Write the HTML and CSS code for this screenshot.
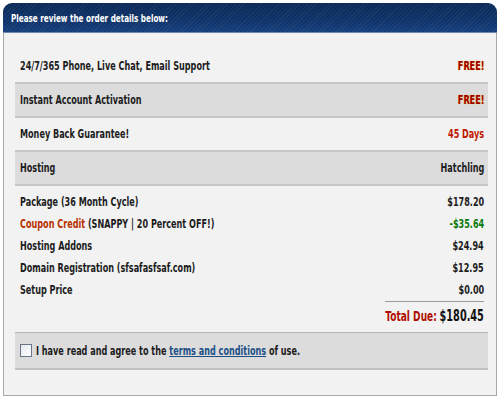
FILE: index.html
```html
<!DOCTYPE html>
<html>
<head>
<meta charset="utf-8">
<link rel="stylesheet" href="styles.css">
</head>
<body>
<div class="panel">
  <div class="panel-head"><span class="tx">Please review the order details below:</span></div>
  <div class="panel-body">
    <div class="row">
      <span class="tx">24/7/365 Phone, Live Chat, Email Support</span>
      <span class="tx r free">FREE!</span>
    </div>
    <div class="row shade">
      <span class="tx">Instant Account Activation</span>
      <span class="tx r free">FREE!</span>
    </div>
    <div class="row">
      <span class="tx">Money Back Guarantee!</span>
      <span class="tx r days">45 Days</span>
    </div>
    <div class="row shade">
      <span class="tx">Hosting</span>
      <span class="tx r">Hatchling</span>
    </div>
    <div class="items">
      <div class="item"><span class="tx">Package (36 Month Cycle)</span><span class="tx r">$178.20</span></div>
      <div class="item"><span class="tx"><span class="coupon">Coupon Credit</span> (SNAPPY | 20 Percent OFF!)</span><span class="tx r credit">-$35.64</span></div>
      <div class="item"><span class="tx">Hosting Addons</span><span class="tx r">$24.94</span></div>
      <div class="item"><span class="tx">Domain Registration (sfsafasfsaf.com)</span><span class="tx r">$12.95</span></div>
      <div class="item"><span class="tx">Setup Price</span><span class="tx r">$0.00</span></div>
    </div>
    <div class="total-wrap">
      <div class="total"><span class="tx r tot"><span class="total-label">Total Due:</span> <span class="total-amt">$180.45</span></span></div>
    </div>
    <div class="terms">
      <span class="check"></span>
      <span class="tx">I have read and agree to the <a href="#" class="link">terms and conditions</a> of use.</span>
    </div>
  </div>
</div>
</body>
</html>
```
FILE: styles.css
```css
html, body {
  margin: 0;
  padding: 0;
  background: #ffffff;
}
body {
  font-family: "DejaVu Sans Condensed", "DejaVu Sans", sans-serif;
  font-size: 12px;
  font-weight: bold;
  color: #1c1c1c;
}
.tx {
  display: inline-block;
  flex: none;
  white-space: nowrap;
  transform: scaleX(0.75);
  transform-origin: left center;
}
.tx.r {
  transform-origin: right center;
}
.panel {
  margin: 3px 3px 0 3px;
  width: 494px;
}
.panel-head {
  box-sizing: border-box;
  height: 30px;
  border-radius: 9px 9px 0 0;
  background:
    repeating-linear-gradient(135deg, rgba(255,255,255,0.05) 0 1px, rgba(0,0,0,0) 1px 3px),
    linear-gradient(to bottom, #0b2a57 0%, #0f336a 60%, #15407c 100%);
  border-bottom: 1px solid #6d86ad;
  color: #ffffff;
  font-size: 11px;
  line-height: 31px;
  padding-left: 8px;
}
.panel-head .tx {
  transform: scaleX(0.73);
}
.panel-body {
  background: #f2f2f2;
  border: 1px solid #a8a8a8;
  border-top: none;
  padding: 17px 8px 25px 11px;
}
.row {
  display: flex;
  justify-content: space-between;
  align-items: center;
  height: 32px;
  padding: 0 4px 0 5px;
  border-bottom: 2px solid #c6c6c6;
}
.shade {
  background: #dcdcdc;
}
.free {
  color: #a10000;
  text-shadow: 0 0 1px #e8a800;
}
.days {
  color: #c01800;
}
.items {
  padding: 5px 4px 0 5px;
}
.item {
  display: flex;
  justify-content: space-between;
  align-items: center;
  height: 22px;
}
.coupon {
  color: #b83000;
}
.credit {
  color: #0a7a0a;
}
.total-wrap {
  display: flex;
  justify-content: flex-end;
  padding-right: 4px;
}
.total {
  width: 99px;
  height: 28px;
  display: flex;
  justify-content: flex-end;
  align-items: center;
  border-top: 1px solid #9a9a9a;
}
.tot {
  transform: scaleX(0.72);
}
.total-label {
  color: #b01000;
  font-size: 14px;
}
.total-amt {
  color: #111111;
  font-size: 15px;
}
.terms {
  display: flex;
  align-items: center;
  gap: 4px;
  height: 35px;
  margin-top: 2px;
  padding-left: 5px;
  background: #dcdcdc;
  border-top: 1px solid #b5b5b5;
  border-bottom: 2px solid #c0c0c0;
}
.check {
  flex: none;
  width: 12px;
  height: 13px;
  border: 1px solid #6a7488;
  background: linear-gradient(to bottom right, #e3e7ed, #ffffff);
  box-sizing: border-box;
}
.link {
  color: #1d4f86;
  text-decoration: underline;
}
```
